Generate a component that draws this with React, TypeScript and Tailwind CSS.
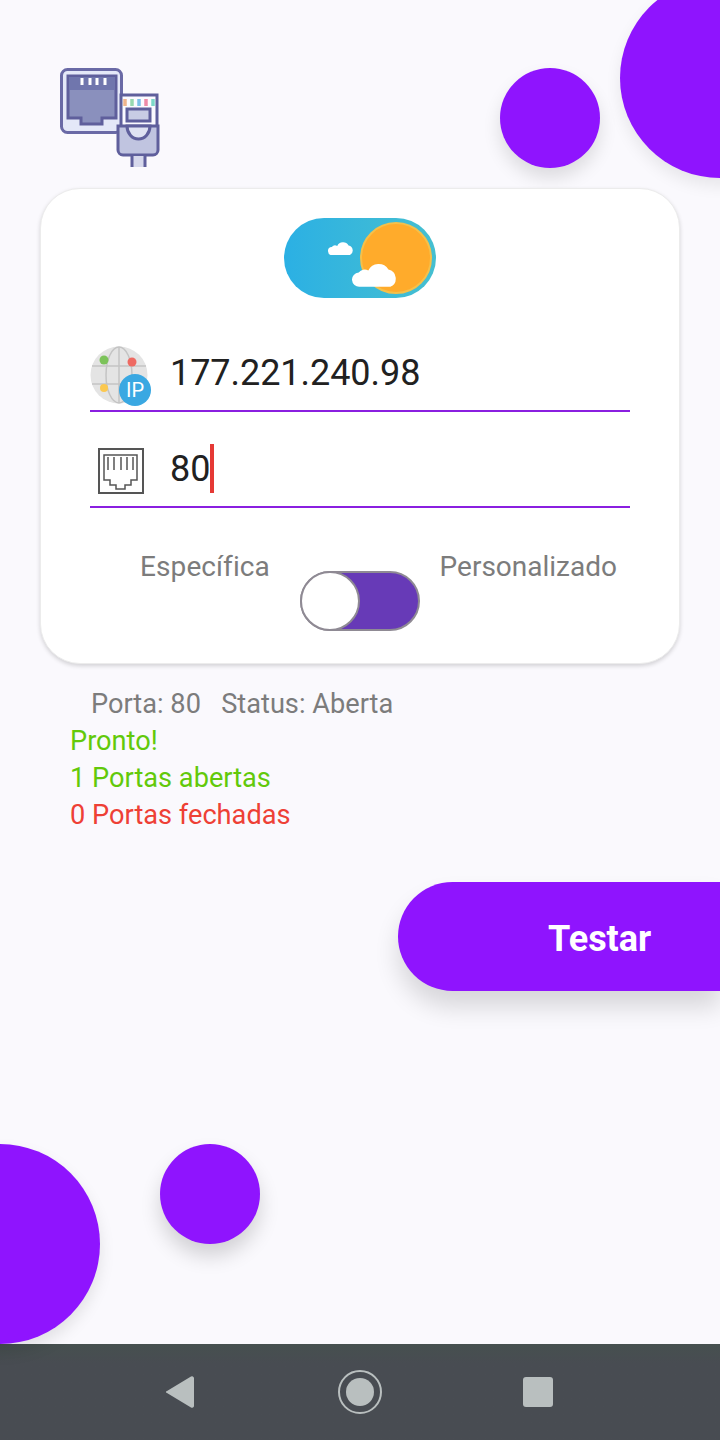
import React from 'react';

function PortIcon() {
  return (
    <svg width="100" height="100" viewBox="0 0 100 100" fill="none">
      <rect x="1.500" y="1.500" width="60" height="63" rx="6" fill="#e4e8f8" stroke="#6a6aa6" strokeWidth="3" />
      <path d="M8 8h48v42H42v6H21v-6H8z" fill="#8a90bd" stroke="#5f5f9c" strokeWidth="3" />
      <rect x="9" y="9" width="46" height="13" fill="#7076ad" />
      <path d="M22 10v7M30 10v7M37 10v7M45 10v7" stroke="#fff" strokeWidth="3" />
      <path d="M61 27h36v32H61z" fill="#fbfaff" stroke="#5f5f9c" strokeWidth="3" />
      <path d="M65 31v7" stroke="#f0b48c" strokeWidth="3.500" />
      <path d="M72 31v7" stroke="#98d8b0" strokeWidth="3.500" />
      <path d="M79 31v7" stroke="#7cc0e8" strokeWidth="3.500" />
      <path d="M86 31v7" stroke="#ee8aa8" strokeWidth="3.500" />
      <path d="M93 31v7" stroke="#7cd8c8" strokeWidth="3.500" />
      <rect x="67" y="41" width="23" height="12" fill="#c8cce4" stroke="#5f5f9c" strokeWidth="3" />
      <path d="M58 58h40v24a5 5 0 0 1-5 5H63a5 5 0 0 1-5-5z" fill="#c0c4e0" stroke="#5f5f9c" strokeWidth="3" />
      <path d="M67 58a11.500 13 0 0 0 23 0z" fill="#dfe2f2" stroke="#5f5f9c" strokeWidth="3" />
      <path d="M72 88h13v11H72z" fill="#d6d8ec" />
      <path d="M72 88v11M85 88v11" stroke="#5f5f9c" strokeWidth="3" />
    </svg>
  );
}

function Cloud({ width }: { width: number }) {
  return (
    <svg width={width} viewBox="0 0 48 28" fill="#fff">
      <path d="M8 28a7.500 7.500 0 0 1-1-15 8 8 0 0 1 10-2A12 12 0 0 1 38 10a9.500 9.500 0 0 1 2 18z" />
    </svg>
  );
}

function WeatherToggle() {
  return (
    <div className="relative w-[152px] h-[80px] rounded-full bg-gradient-to-r from-[#2bb0e4] to-[#45bfd0]">
      <div className="absolute right-[4px] top-[4px] w-[72px] h-[72px] rounded-full bg-[#ffab2b] border-2 border-[#f5c04a]" />
      <div className="absolute left-[44px] top-[22px]">
        <Cloud width={26} />
      </div>
      <div className="absolute left-[68px] top-[42px]">
        <Cloud width={46} />
      </div>
    </div>
  );
}

function GlobeIcon() {
  return (
    <svg width="62" height="60" viewBox="0 0 62 60" fill="none">
      <circle cx="29" cy="29" r="28.500" fill="#e4e4e4" />
      <g stroke="#c4c4c4" strokeWidth="1.500">
        <ellipse cx="29" cy="29" rx="13" ry="28" />
        <path d="M29 1v56M2 20h54M2 38h54" />
      </g>
      <circle cx="14" cy="14" r="4.500" fill="#7cc35a" />
      <circle cx="42" cy="16" r="4.500" fill="#ee6a62" />
      <circle cx="14" cy="42" r="4" fill="#fbc850" />
      <circle cx="45" cy="44" r="16" fill="#3aa8e2" />
      <text x="45" y="51" textAnchor="middle" fill="#fff" fontSize="20" fontFamily="Roboto, sans-serif">IP</text>
    </svg>
  );
}

function JackIcon() {
  return (
    <svg width="46" height="48" viewBox="0 0 46 48" fill="none" stroke="#555" strokeWidth="1.500">
      <rect x="1" y="2" width="44" height="44" strokeWidth="2" />
      <path d="M6 8h33v25h-6v5h-6v4h-9v-4h-6v-5H6z" />
      <path d="M10 10v13M16 10v13M23 10v13M29 10v13M35 10v13" />
    </svg>
  );
}

function Field({ icon, children }: { icon: React.ReactNode; children: React.ReactNode }) {
  return (
    <div className="flex h-[64px] items-center border-b-2 border-[#8a1fe0]">
      <div className="w-[81px] shrink-0">{icon}</div>
      {children}
    </div>
  );
}

export default function App() {
  return (
    <div className="relative w-[720px] h-[1440px] flex flex-col overflow-hidden bg-[#faf9fd] font-['Roboto',sans-serif]">
      {/* circulos decorativos */}
      <div className="absolute left-[620px] top-[-22px] w-[200px] h-[200px] rounded-full bg-[#8f14fe] shadow-[0_8px_16px_rgba(0,0,0,0.08)]" />
      <div className="absolute left-[-100px] top-[1144px] w-[200px] h-[200px] rounded-full bg-[#8f14fe] shadow-[0_8px_16px_rgba(0,0,0,0.1)]" />

      <div className="flex-1 flex flex-col">
        <div className="flex justify-between pt-[68px] pl-[60px] pr-[120px]">
          <PortIcon />
          <div className="w-[100px] h-[100px] rounded-full bg-[#8f14fe] shadow-[0_10px_18px_rgba(0,0,0,0.12)]" />
        </div>

        <div className="relative mx-[40px] mt-[20px] h-[476px] rounded-[40px] bg-white border border-[#ececec] shadow-[0_2px_4px_rgba(0,0,0,0.16)] px-[49px] pt-[29px]">
          <div className="flex justify-center">
            <WeatherToggle />
          </div>
          <div className="mt-[50px]">
            <Field icon={<div className="mb-[6px]"><GlobeIcon /></div>}>
              <span className="ml-[-1px] text-[36px] leading-[42px] tracking-[-0.05px] text-[#212121] pb-[12px]">177.221.240.98</span>
            </Field>
          </div>
          <div className="mt-[32px]">
            <Field icon={<div className="pl-[8px] pb-[8px]"><JackIcon /></div>}>
              <span className="ml-[-1px] text-[36px] leading-[42px] text-[#212121] pb-[12px]">80</span>
              <span className="w-[4px] h-[49px] mb-[14px] bg-[#e53935]" />
            </Field>
          </div>
          <div className="flex justify-between mt-[42px] px-[50px] text-[28px] leading-[34px] text-[#7c7c7c]">
            <span className="tracking-[0.1px]">Específica</span>
            <span className="mr-[-37px] ml-[-37px]">Personalizado</span>
          </div>
          <div className="flex justify-center mt-[-13px]">
            <div className="relative w-[120px] h-[60px] rounded-full bg-[#673ab7] border-2 border-[#8f8a94]">
              <div className="absolute left-[-2px] top-[-2px] w-[60px] h-[60px] rounded-full bg-white border-2 border-[#8f8a94]" />
            </div>
          </div>
        </div>

        <div className="pl-[70px] pt-[22px] text-[27.2px] leading-[37px]">
          <div className="pl-[21px] text-[#7c7c7c]">Porta: 80&nbsp;&nbsp;&nbsp;Status: Aberta</div>
          <div className="text-[#62c90a]">Pronto!</div>
          <div className="text-[#62c90a]">1 Portas abertas</div>
          <div className="text-[#ee4035]">0 Portas fechadas</div>
        </div>

        <div className="flex justify-end mt-[48px]">
          <button className="w-[322px] h-[109px] rounded-l-full bg-[#8f14fe] pl-[150px] pt-[5px] text-left text-[36px] font-bold text-white shadow-[0_16px_24px_rgba(0,0,0,0.14)]">
            Testar
          </button>
        </div>

        <div className="mt-auto pl-[160px] pb-[100px]">
          <div className="w-[100px] h-[100px] rounded-full bg-[#8f14fe] shadow-[0_12px_20px_rgba(0,0,0,0.16)]" />
        </div>
      </div>

      <div className="h-[96px] shrink-0 bg-gradient-to-b from-[#46504f] to-[#484c52] to-[20px] flex items-center justify-center pr-[2px]">
        <svg width="28" height="34" viewBox="0 0 28 34" className="mr-[144px]">
          <path d="M25 1.500 1 16a1 1 0 0 0 0 2l24 14.500a2 2 0 0 0 3-1.500V3a2 2 0 0 0-3-1.500z" fill="#b9bfbf" />
        </svg>
        <svg width="44" height="44" viewBox="0 0 44 44" className="mr-[141px]">
          <circle cx="22" cy="22" r="21" fill="none" stroke="#b9bfbf" strokeWidth="2" />
          <circle cx="22" cy="22" r="14" fill="#b9bfbf" />
        </svg>
        <div className="w-[30px] h-[30px] rounded-[3px] bg-[#b9bfbf]" />
      </div>
    </div>
  );
}
